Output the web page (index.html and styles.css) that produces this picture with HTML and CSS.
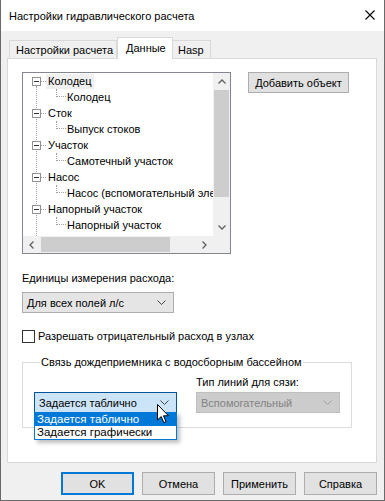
FILE: index.html
```html
<!DOCTYPE html>
<html>
<head>
  <title>Настройки гидравлического расчета</title>
  <link rel="stylesheet" href="styles.css">
</head>
<body>

<div class="window">
  <div class="titlebar">
    <span class="title">Настройки гидравлического расчета</span>
    <svg class="close" width="10" height="10" viewBox="0 0 10 10">
      <path d="M0.5 0.5 L9.5 9.5 M9.5 0.5 L0.5 9.5" stroke="#000" stroke-width="1.1" fill="none"/>
    </svg>
  </div>

  <div class="dialog">
    <div class="tabs">
      <div class="tab tab-first">Настройки расчета</div>
      <div class="tab tab-active">Данные</div>
      <div class="tab tab-last">Hasp</div>
    </div>

    <div class="panel">
      <div class="top-row">
        <div class="tree">
          <div class="tree-view">
            <div class="row root"><span class="expander"></span><span class="hline"></span><span class="label selected">Колодец</span></div>
            <div class="row child"><span class="elbow"></span><span class="label">Колодец</span></div>
            <div class="row root"><span class="expander"></span><span class="hline"></span><span class="label">Сток</span></div>
            <div class="row child"><span class="elbow"></span><span class="label">Выпуск стоков</span></div>
            <div class="row root"><span class="expander"></span><span class="hline"></span><span class="label">Участок</span></div>
            <div class="row child"><span class="elbow"></span><span class="label">Самотечный участок</span></div>
            <div class="row root"><span class="expander"></span><span class="hline"></span><span class="label">Насос</span></div>
            <div class="row child"><span class="elbow"></span><span class="label">Насос (вспомогательный элемент)</span></div>
            <div class="row root"><span class="expander"></span><span class="hline"></span><span class="label">Напорный участок</span></div>
            <div class="row child"><span class="elbow"></span><span class="label">Напорный участок</span></div>
            <div class="row root"><span class="expander"></span><span class="hline"></span><span class="label">Водосборный бассейн</span></div>
          </div>
          <div class="vscroll">
            <div class="arrow">
              <svg width="8" height="5" viewBox="0 0 8 5"><polyline points="0.5,4.5 4,1 7.5,4.5" fill="none" stroke="#606060" stroke-width="1.3"/></svg>
            </div>
            <div class="vtrack"><div class="vthumb"></div></div>
            <div class="arrow">
              <svg width="8" height="5" viewBox="0 0 8 5"><polyline points="0.5,0.5 4,4 7.5,0.5" fill="none" stroke="#606060" stroke-width="1.3"/></svg>
            </div>
          </div>
          <div class="hscroll">
            <div class="arrow">
              <svg width="5" height="8" viewBox="0 0 5 8"><polyline points="4.5,0.5 1,4 4.5,7.5" fill="none" stroke="#606060" stroke-width="1.3"/></svg>
            </div>
            <div class="htrack"><div class="hthumb"></div></div>
            <div class="arrow">
              <svg width="5" height="8" viewBox="0 0 5 8"><polyline points="0.5,0.5 4,4 0.5,7.5" fill="none" stroke="#606060" stroke-width="1.3"/></svg>
            </div>
          </div>
          <div class="corner"></div>
        </div>

        <button class="btn add-btn">Добавить объект</button>
      </div>

      <div class="field-label">Единицы измерения расхода:</div>
      <div class="combo units">
        <span>Для всех полей л/с</span>
        <svg class="chev" width="9" height="5" viewBox="0 0 9 5"><polyline points="0.5,0.5 4.5,4.5 8.5,0.5" fill="none" stroke="#444" stroke-width="1"/></svg>
      </div>

      <label class="check-row">
        <span class="checkbox"></span>
        <span>Разрешать отрицательный расход в узлах</span>
      </label>

      <fieldset class="group">
        <legend>Связь дождеприемника с водосборным бассейном</legend>
        <div class="group-grid">
          <div></div>
          <div class="small-label">Тип линий для сязи:</div>
          <div class="combo-wrap">
            <div class="combo focused">
              <span>Задается таблично</span>
              <svg class="chev" width="9" height="5" viewBox="0 0 9 5"><polyline points="0.5,0.5 4.5,4.5 8.5,0.5" fill="none" stroke="#444" stroke-width="1"/></svg>
            </div>
            <div class="dropdown">
              <div class="option active">Задается таблично</div>
              <div class="option">Задается графически</div>
            </div>
            <svg class="cursor" width="13" height="20" viewBox="0 0 13 20">
              <path d="M0.5 0.5 L0.5 16 L4.2 12.6 L6.8 18.6 L9 17.6 L6.5 11.8 L11.5 11.8 Z" fill="#fff" stroke="#000" stroke-width="1" stroke-linejoin="miter"/>
            </svg>
          </div>
          <div class="combo disabled">
            <span>Вспомогательный</span>
            <svg class="chev" width="9" height="5" viewBox="0 0 9 5"><polyline points="0.5,0.5 4.5,4.5 8.5,0.5" fill="none" stroke="#a0a0a0" stroke-width="1"/></svg>
          </div>
        </div>
      </fieldset>
    </div>

    <div class="buttons">
      <button class="btn default">OK</button>
      <button class="btn">Отмена</button>
      <button class="btn">Применить</button>
      <button class="btn">Справка</button>
    </div>
  </div>
</div>

</body>
</html>
```

FILE: styles.css
```css
body {
  margin: 0;
  font-family: "Liberation Sans", Arial, sans-serif;
  font-size: 11px;
  color: #000;
}

.window {
  width: 383px;
  height: 500px;
  border: 1px solid #6a6a6a;
  border-top: none;
  background: #f0f0f0;
  display: flex;
  flex-direction: column;
}

.titlebar {
  height: 31px;
  background: #fff;
  display: flex;
  align-items: center;
  justify-content: space-between;
  padding: 0 9px 0 8px;
}

.title {
  font-size: 11px;
  margin-top: 1px;
}

.close {
  margin-top: -1px;
}

.dialog {
  padding: 6px 7px 0 6px;
}

/* tabs */
.tabs {
  display: flex;
  align-items: flex-end;
  height: 21px;
  padding-left: 2px;
}

.tab {
  box-sizing: border-box;
  height: 18px;
  line-height: 19px;
  border: 1px solid #d9d9d9;
  border-bottom: none;
  padding: 0 0 0 6px;
  background: #f0f0f0;
  white-space: nowrap;
}

.tab-first {
  width: 108px;
}

.tab-active {
  width: 56px;
  height: 22px;
  line-height: 20px;
  background: #fff;
  margin-bottom: -1px;
  padding-left: 8px;
}

.tab-last {
  border-left: none;
  width: 38px;
  padding-left: 5px;
}

.panel {
  border: 1px solid #d9d9d9;
  background: #fff;
  padding: 13px 0 0 14px;
  box-sizing: border-box;
  height: 405px;
}

.top-row {
  display: flex;
  align-items: flex-start;
  gap: 17px;
}

/* tree */
.tree {
  width: 209px;
  height: 182px;
  box-sizing: border-box;
  border: 1px solid #828790;
  display: grid;
  grid-template-columns: 190px 17px;
  grid-template-rows: 163px 17px;
}

.tree-view {
  grid-row: 1;
  grid-column: 1;
  position: relative;
  overflow: hidden;
  white-space: nowrap;
}

.tree-view::before {
  content: "";
  position: absolute;
  left: 13px;
  top: 13px;
  bottom: 0;
  border-left: 1px dotted #a0a0a0;
}

.row {
  height: 16px;
  display: flex;
  align-items: center;
}

.root {
  padding-left: 9px;
}

.child {
  padding-left: 33px;
}

.expander {
  position: relative;
  width: 7px;
  height: 7px;
  border: 1px solid #919191;
  background: #fff;
  flex: none;
}

.expander::after {
  content: "";
  position: absolute;
  left: 1px;
  top: 3px;
  width: 5px;
  height: 1px;
  background: #333;
}

.hline {
  width: 5px;
  border-top: 1px dotted #a0a0a0;
  flex: none;
}

.elbow {
  align-self: flex-start;
  width: 9px;
  height: 7px;
  border-left: 1px dotted #a0a0a0;
  border-bottom: 1px dotted #a0a0a0;
  flex: none;
}

.label {
  padding: 0 2px;
  line-height: 15px;
}

.child .label {
  padding-left: 1px;
}

.selected {
  background: #f0f0f0;
}

.vscroll {
  grid-row: 1;
  grid-column: 2;
  display: flex;
  flex-direction: column;
  background: #f0f0f0;
}

.hscroll {
  grid-row: 2;
  grid-column: 1;
  display: flex;
  background: #f0f0f0;
}

.corner {
  grid-row: 2;
  grid-column: 2;
  background: #f0f0f0;
}

.arrow {
  width: 17px;
  height: 17px;
  display: flex;
  align-items: center;
  justify-content: center;
  flex: none;
}

.vtrack {
  flex: 1;
}

.vthumb {
  height: 107px;
  margin: 0 1px;
  background: #cdcdcd;
}

.htrack {
  flex: 1;
  padding-top: 1px;
}

.hthumb {
  width: 129px;
  height: 15px;
  margin-left: 1px;
  background: #cdcdcd;
}

/* buttons */
.btn {
  font-family: inherit;
  font-size: 11px;
  color: #000;
  background: #e1e1e1;
  border: 1px solid #adadad;
  padding: 0;
  margin: 0;
}

.add-btn {
  width: 101px;
  height: 21px;
}

.field-label {
  margin-top: 16px;
  line-height: 16px;
}

.combo {
  position: relative;
  height: 21px;
  box-sizing: border-box;
  border: 1px solid #adadad;
  background: #e5e5e5;
  display: flex;
  align-items: center;
  justify-content: space-between;
  padding: 0 7px 0 4px;
}

.units {
  width: 152px;
  margin-top: 6px;
}

.check-row {
  display: flex;
  align-items: center;
  gap: 3px;
  height: 16px;
  margin-top: 15px;
}

.checkbox {
  width: 11px;
  height: 11px;
  border: 1px solid #333;
  background: #fff;
}

/* group box */
.group {
  width: 330px;
  box-sizing: border-box;
  margin: 10px 0 0 0;
  padding: 4px 0 14px 11px;
  border: 1px solid #dcdcdc;
  min-width: 0;
}

.group legend {
  padding: 0 1px;
  margin-left: 6px;
  line-height: 16px;
}

.group-grid {
  display: grid;
  grid-template-columns: 143px 144px;
  column-gap: 19px;
  row-gap: 2px;
}

.small-label {
  line-height: 16px;
}

.combo-wrap {
  position: relative;
}

.focused {
  background: #cce4f7;
  border-color: #005499;
}

.disabled {
  background: #cccccc;
  border-color: #bfbfbf;
  color: #838383;
}

.dropdown {
  position: absolute;
  left: 0;
  top: 20px;
  width: 143px;
  box-sizing: border-box;
  border: 1px solid #0078d7;
  background: #fff;
  box-shadow: 3px 3px 4px rgba(0, 0, 0, 0.25);
  z-index: 2;
}

.option {
  height: 13px;
  line-height: 13px;
  padding-left: 2px;
  font-size: 11.5px;
}

.option.active {
  background: #0078d7;
  color: #fff;
}

.cursor {
  position: absolute;
  left: 123px;
  top: 12px;
  z-index: 3;
}

.buttons {
  display: flex;
  justify-content: flex-end;
  gap: 8px;
  margin-top: 9px;
}

.buttons .btn {
  width: 73px;
  height: 23px;
}

.buttons .default {
  border: 2px solid #0078d7;
}
```
